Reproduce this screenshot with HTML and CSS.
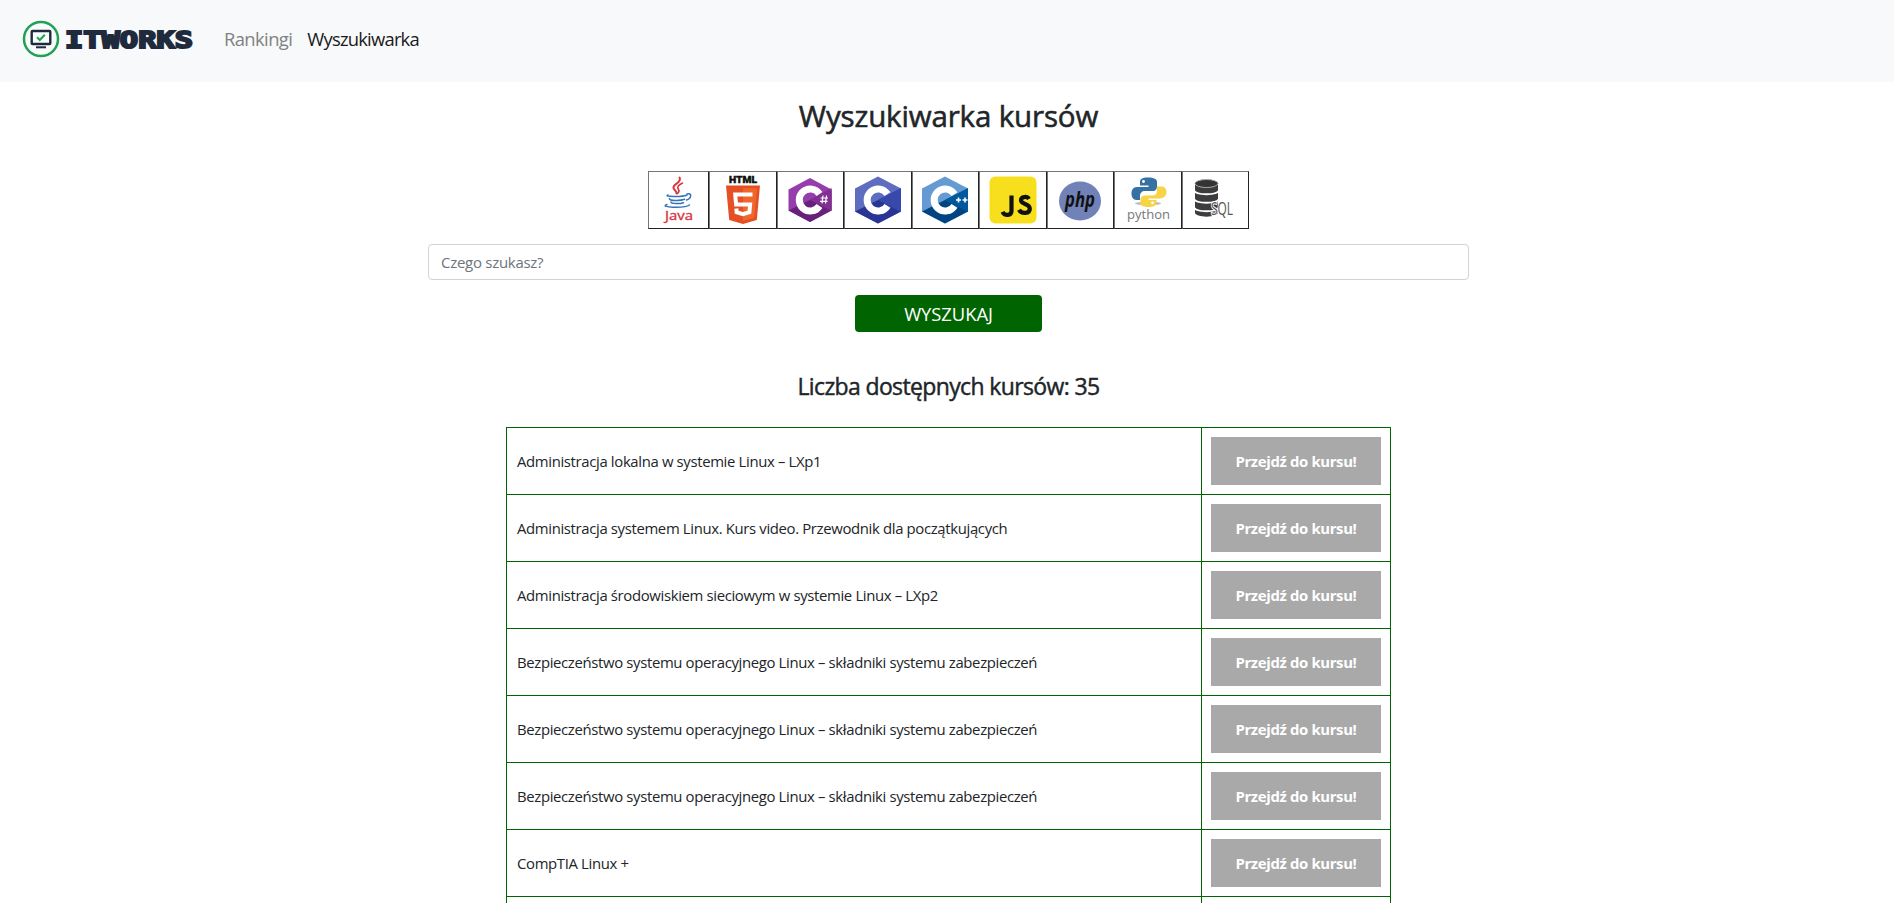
FILE: index.html
```html
<!DOCTYPE html>
<html lang="pl">
<head>
<meta charset="utf-8">
<title>ITWORKS</title>
<link rel="stylesheet" href="styles.css">
</head>
<body>
<nav class="navbar">
  <a class="brand">
    <svg class="brand-icon" viewBox="0 0 38 38"><circle cx="19" cy="19" r="17" fill="#f8fcfa" stroke="#22a055" stroke-width="2.5"/><rect x="9.700" y="11" width="18.600" height="13" rx=".8" fill="none" stroke="#1f2b3c" stroke-width="2.400"/><path d="M14 27.300h10" stroke="#1f2b3c" stroke-width="2"/><path d="M15 17.200l2.800 2.800 5-5.200" fill="none" stroke="#22a055" stroke-width="2"/></svg>
    <svg class="brand-name" viewBox="0 0 130 30"><text x="1" y="23.500" textLength="128" lengthAdjust="spacingAndGlyphs">ITWORKS</text></svg>
  </a>
  <a class="nav-link">Rankingi</a>
  <a class="nav-link active">Wyszukiwarka</a>
</nav>
<main class="page">
  <h1 class="title">Wyszukiwarka kursów</h1>
  <div class="langs">
    <button class="lang first"><svg viewBox="0 0 48 48"><g fill="none" stroke="#d9373f" stroke-linecap="round"><path d="M24.500 1.500c3 5-7 6.500-6 10.500.4 2 3.500 3 3 5.500" stroke-width="2"/><path d="M27.500 7c-4 2-6 4-4 6.500 1.500 2 0 3-1 4" stroke-width="1.600"/></g><g fill="none" stroke="#3174b9" stroke-linecap="round" stroke-width="1.500"><path d="M13 19c-5 1.500 13 2.500 19 0M14.500 22.500c-1 2.500 11 2.500 15 .8M16 26c0 2 9 2 12.500.7M12 28.500c-9 3 18 4 22.500.5M32 18c5-1.500 5 4-.5 6"/></g><text x="10" y="44" class="t-java" textLength="28" lengthAdjust="spacingAndGlyphs">Java</text></svg></button>
    <button class="lang"><svg viewBox="0 0 48 48"><text x="10" y="7" class="t-html" textLength="28" lengthAdjust="spacingAndGlyphs">HTML</text><path d="M7 9.500h34l-3.200 34.500L24 48l-13.800-4z" fill="#e44f26"/><path d="M24 12.300h14l-2.700 29.500L24 45z" fill="#f1662a"/><path d="M33.500 18.500H16.200l.9 10h14l-.7 7.700-6.400 2-6.400-2-.3-3.700" fill="none" stroke="#fff" stroke-width="4"/></svg></button>
    <button class="lang"><svg viewBox="0 0 48 48"><path d="M24 2l21.500 11.500v21L24 46 2.500 34.500v-21z" fill="#953dac"/><path d="M2.500 34.500L45.500 13.500v21L24 46z" fill="#68217a"/><path d="M24 24l21.500-12v23z" fill="#813091"/><path d="M33.500 18A11 11 0 1 0 33.500 30" fill="none" stroke="#fff" stroke-width="7"/><path d="M37 19.500l-1 8M40.500 19.500l-1 8M34.500 22h7.500M34 25.300h7.500" stroke="#fff" stroke-width="1.200"/></svg></button>
    <button class="lang"><svg viewBox="0 0 48 48"><path d="M24 .5L47 12.500v23L24 47.500 1 35.500v-23z" fill="#5f6dc1"/><path d="M1 35.500L47 12.500v23L24 47.500z" fill="#283593"/><path d="M24 24l23-12v24z" fill="#3949ab"/><path d="M33.500 18.200A11 11 0 1 0 33.500 29.800" fill="none" stroke="#fff" stroke-width="7"/></svg></button>
    <button class="lang"><svg viewBox="0 0 48 48"><path d="M24 .5L47 12.500v23L24 47.500 1 35.500v-23z" fill="#659ad3"/><path d="M1 35.500L47 12.500v23L24 47.500z" fill="#004482"/><path d="M24 24l23-12v24z" fill="#00599c"/><path d="M33.500 18.200A11 11 0 1 0 33.500 29.800" fill="none" stroke="#fff" stroke-width="7"/><path d="M35 24h5M37.500 21.500v5M41.500 24h5M44 21.500v5" stroke="#fff" stroke-width="1.600"/></svg></button>
    <button class="lang"><svg viewBox="0 0 48 48"><rect x=".5" y=".5" width="47" height="47" rx="6" fill="#f7df1e"/><path d="M22.500 19.500v15.500c0 5-7 5-9 .8M40 23c-2-3.200-8-2.400-8 1.200 0 4.600 8.800 3 8.800 8.500 0 5.200-8.300 5.600-10.800 1" fill="none" stroke="#111" stroke-width="4.200"/></svg></button>
    <button class="lang"><svg viewBox="0 0 48 48"><ellipse cx="24" cy="25" rx="21" ry="19.500" fill="#7182b8"/><text x="9" y="31" class="t-php" textLength="30" lengthAdjust="spacingAndGlyphs">php</text></svg></button>
    <button class="lang"><svg viewBox="0 0 48 48"><ellipse cx="24" cy="27.500" rx="13" ry="1.600" fill="#bbb"/><path d="M24 1.500c-6 0-8 1.500-8 4.500v3.500h8.500v1.500H13c-4 0-5.500 3-5.500 6.500s1.500 6.500 5 6.500H16v-4c0-3 2-5 5-5h8c2.500 0 4-2 4-4.500V6c0-3-3-4.500-9-4.500z" fill="#3671a3"/><path d="M33 10.500v4.500c0 3-2 4.500-4.500 4.500h-7.500c-3 0-4.500 2-4.500 4v4c0 2 3 3.500 8 3.500s8-1.500 8-4v-3h-8v-1.500h11.500c3 0 6.500-3 6.500-6s-1.500-6-4.500-6z" fill="#f6d445"/><circle cx="19.500" cy="5.500" r="1.400" fill="#fff"/><circle cx="28.500" cy="26.800" r="1.400" fill="#fff"/><text x="3" y="43" class="t-python" textLength="43" lengthAdjust="spacingAndGlyphs">python</text></svg></button>
    <button class="lang"><svg viewBox="0 0 48 48"><path d="M4 7v29.500C4 42 27 42 27 36.500V7z" fill="#3c3c3e"/><ellipse cx="15.500" cy="7.500" rx="11.500" ry="4" fill="#333" stroke="#aaa" stroke-width="1"/><path d="M3 14.500c2 5 23 5 25 0M3 23c2 5 23 5 25 0M3 31.500c2 5 23 5 25 0" fill="none" stroke="#fff" stroke-width="2"/><text x="20" y="39" class="t-sql" textLength="22" lengthAdjust="spacingAndGlyphs">SQL</text></svg></button>
  </div>
  <input class="search" type="text" placeholder="Czego szukasz?">
  <button class="submit">WYSZUKAJ</button>
  <h2 class="count">Liczba dostępnych kursów: 35</h2>
  <table class="courses">
    <tr><td>Administracja lokalna w systemie Linux – LXp1</td><td><a class="go">Przejdź do kursu!</a></td></tr>
    <tr><td>Administracja systemem Linux. Kurs video. Przewodnik dla początkujących</td><td><a class="go">Przejdź do kursu!</a></td></tr>
    <tr><td>Administracja środowiskiem sieciowym w systemie Linux – LXp2</td><td><a class="go">Przejdź do kursu!</a></td></tr>
    <tr><td>Bezpieczeństwo systemu operacyjnego Linux – składniki systemu zabezpieczeń</td><td><a class="go">Przejdź do kursu!</a></td></tr>
    <tr><td>Bezpieczeństwo systemu operacyjnego Linux – składniki systemu zabezpieczeń</td><td><a class="go">Przejdź do kursu!</a></td></tr>
    <tr><td>Bezpieczeństwo systemu operacyjnego Linux – składniki systemu zabezpieczeń</td><td><a class="go">Przejdź do kursu!</a></td></tr>
    <tr><td>CompTIA Linux +</td><td><a class="go">Przejdź do kursu!</a></td></tr>
    <tr><td></td><td></td></tr>
  </table>
</main>
</body>
</html>
```
FILE: styles.css
```css
* { box-sizing: border-box; }
html, body { height: 100%; }
body { margin: 0; overflow: hidden; background: #fff; color: #212529; font-family: "Open Sans", "Noto Sans", sans-serif; }
.navbar { height: 82px; background: #f8f9fa; display: flex; align-items: center; padding: 0 22px 4px; font-size: 18.4px; }
.brand { display: flex; align-items: center; width: 202px; }
.brand-icon { width: 38px; height: 38px; flex: none; }
.brand-name { width: 130px; height: 30px; margin-left: 4px; overflow: visible; }
.brand-name text { font: 700 23.5px "DejaVu Sans Mono", monospace; fill: #1f2b3c; stroke: #1f2b3c; stroke-width: 2px; }
.nav-link { color: #808182; margin: -1px 15px 0 0; letter-spacing: -.6px; }
.nav-link.active { color: #19191a; letter-spacing: -.78px; }
.page { display: flex; flex-direction: column; align-items: center; padding-left: 3px; }
.title { margin: 13px 0 0; height: 76px; font-size: 29.5px; line-height: 42px; font-weight: 400; letter-spacing: -.15px; -webkit-text-stroke: .55px #212529; white-space: nowrap; }
.langs { display: flex; height: 58px; }
.lang { width: 67.5px; height: 58px; padding: 0; border: 1px solid; border-color: #767676 #222 #222 #767676; background: #fff; display: flex; align-items: center; justify-content: center; }
.lang.first { width: 61px; }
.lang svg { width: 48px; height: 48px; flex: none; overflow: visible; }
.t-java { font: 13px "Open Sans", sans-serif; fill: #d9373f; stroke: #d9373f; stroke-width: .4px; }
.t-html { font: 900 9px Roboto, sans-serif; fill: #111; stroke: #111; stroke-width: .4px; }
.t-php { font: italic 700 21px "Open Sans", sans-serif; fill: #111; }
.t-python { font: 12.5px "Open Sans", sans-serif; fill: #777; }
.t-sql { font: 18px "Open Sans", sans-serif; fill: #555; stroke: #fff; stroke-width: 2px; paint-order: stroke; }
.search { width: 1041px; height: 36px; margin-top: 15px; border: 1px solid #ced4da; border-radius: 4px; padding: 0 12px; font: 15px "Open Sans", sans-serif; letter-spacing: -.28px; }
.search::placeholder { color: #6c757d; opacity: 1; }
.submit { width: 187px; height: 37px; margin-top: 15px; border: 0; border-radius: 4px; background: #006400; color: #fff; font: 18.4px "Open Sans", sans-serif; letter-spacing: -.05px; }
.count { margin: 38px 0 24px; font-size: 23px; line-height: 33px; font-weight: 400; letter-spacing: -.63px; -webkit-text-stroke: .45px #212529; white-space: nowrap; }
.courses { width: 885px; border-collapse: collapse; table-layout: fixed; font-size: 14.9px; letter-spacing: -.35px; }
.courses td { height: 67px; border: 1px solid #006400; padding: 0 9px; }
.courses td:first-child { padding-left: 10px; }
.courses td:last-child { width: 189px; }
.go { display: block; width: 170px; height: 48px; background: #a9a9a9; color: #fff; font-weight: 700; line-height: 48px; text-align: center; }
```
